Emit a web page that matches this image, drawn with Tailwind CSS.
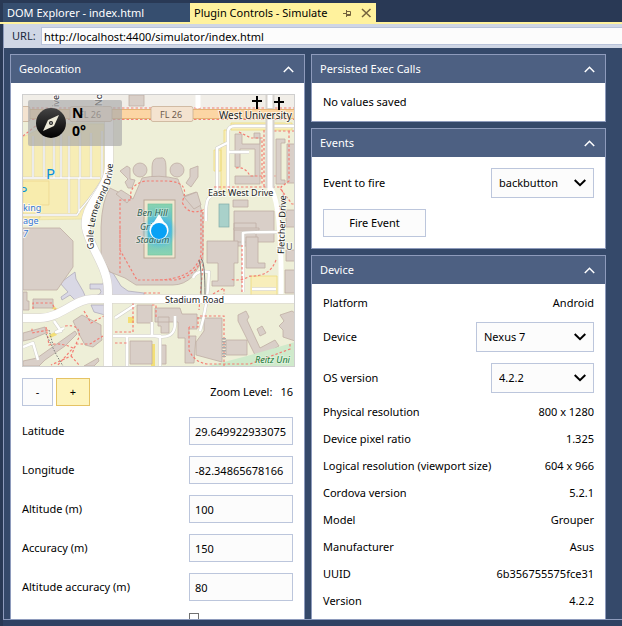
<!DOCTYPE html>
<html lang="en">
<head>
<meta charset="utf-8">
<title>Plugin Controls - Simulate</title>
<script src="https://cdn.jsdelivr.net/npm/@tailwindcss/browser@4"></script>
</head>
<body class="flex h-screen flex-col overflow-hidden bg-[#293955] pt-[3px] font-['Noto_Sans','Open_Sans',sans-serif] text-[11px] leading-4 text-black">
<nav class="flex h-[21px] shrink-0 border-b-2 border-[#fff29d] pl-[3px]" aria-label="Documents">
  <a href="#dom" class="flex w-[187px] items-center bg-[#364e6f] pl-1 text-white">DOM Explorer - index.html</a>
  <div class="flex w-[186px] items-center bg-[#fff29d] pl-1">
    <a href="#simulate" class="w-[148px] whitespace-nowrap">Plugin Controls - Simulate</a>
    <button aria-label="Pin" class="mr-2"><svg width="11" height="10" viewBox="0 0 11 10" fill="none" stroke="#75633d"><path d="M1 5.500h3M4.500 2v7M4.500 3.500h4v4h-4M5 6.500h4"/></svg></button>
    <button aria-label="Close"><svg width="11" height="10" viewBox="0 0 11 10" fill="none" stroke="#75633d" stroke-width="1.500"><path d="M1 1l8.500 8M9.500 1L1 9"/></svg></button>
  </div>
</nav>
<div class="ml-[3px] flex min-h-0 flex-1 flex-col border-b border-l border-[#8e9bbc] bg-[#35496a]">
  <form class="flex h-6 shrink-0 items-center bg-[#cfd6e5] pl-2">
    <label for="url" class="w-[29px] text-[#1b293e]">URL:</label>
    <input id="url" type="text" value="http://localhost:4400/simulator/index.html" class="h-[18px] min-w-0 flex-1 border border-r-0 border-[#b9c3da] bg-[#fcfcfc] pl-[2px]">
  </form>
  <main class="grid min-h-0 flex-1 grid-cols-2 gap-[6px] overflow-hidden pt-[6px] pr-4 pl-[6px]">
    <div class="min-w-0">
      <section class="border border-[#8e9bbc] bg-white">
        <h2 class="flex h-7 items-center justify-between bg-[#4d6082] pr-[10px] pl-2 text-white">Geolocation
          <button aria-label="Collapse Geolocation"><svg width="11" height="7" viewBox="0 0 11 7" fill="none" stroke="#fff" stroke-width="1.500"><path d="M.8 6l4.700-4.700L10.200 6"/></svg></button>
        </h2>
        <div class="flex flex-col gap-[11px] pt-[11px] pr-[11px] pl-[11px]">
          <svg class="block w-[calc(100%+2px)] border border-[#cfcfcf]" viewBox="23 95 271 271" role="img" aria-label="Map">
            <defs>
              <linearGradient id="pitch" x1="0" y1="0" x2="0" y2="1"><stop offset="0" stop-color="#89d3af"/><stop offset=".45" stop-color="#55b9d6"/><stop offset="1" stop-color="#8bd4b0"/></linearGradient>
              <radialGradient id="glow"><stop offset=".4" stop-color="#25b0f4" stop-opacity=".8"/><stop offset="1" stop-color="#55bfe8" stop-opacity="0"/></radialGradient>
              <linearGradient id="compass" x1="0" y1="0" x2="0" y2="1"><stop offset="0" stop-color="#444"/><stop offset="1" stop-color="#000"/></linearGradient>
              <path id="gale" d="M94 249C91 226 98 207 106 193C111 184 113 175 113 160"/>
            </defs>
            <rect x="22" y="94" width="274" height="274" fill="#eeefd8"/>
            <rect x="22" y="94" width="274" height="15" fill="#f1eee8"/>
            <!-- parking areas -->
            <path d="M23 137L50 124H104V185L82 219L23 220Z" fill="#f7edb5" stroke="#e6dfa5" stroke-width=".7"/>
            <path d="M23 181H49V205H40V218H23Z" fill="#f8ecad" stroke="#ecd48a" stroke-width=".7"/>
            <g fill="#f8eeba" stroke="#eddb7c" stroke-width=".8"><path d="M231 123H292V130H231ZM224 130h4v62h-7v-48h3ZM214 150h7v21h-7Z"/><path d="M251 276h26v20h-26Z"/></g>
            <g fill="#f3df77"><path d="M151 344h4v23h-4ZM128 317h6v6h-6ZM49 335l6-3 2 3-7 3ZM53 306l5 3-1 2-6-3Z"/></g>
            <!-- plazas -->
            <path d="M60 283L75 272L76 279L83 291L86 298L78 303L70 295L62 300L61 297L68 292Z" fill="#d9d8e5" stroke="#a9a5b6" stroke-width=".7"/>
            <path d="M90 284H103L106 270L113 273L121 286L128 291L144 293V297H91Q104 295 100 289L90 289ZM91 305H105V315L94 312Z" fill="#d9d8e5" stroke="#a9a5b6" stroke-width=".7"/>
            <g fill="#d9cfc8" stroke="#bfada3" stroke-width=".8">
              <!-- west blocks -->
              <path d="M23 228H60L73 241V267L57 290H23ZM23 292H27V301H29V310H23ZM33 299H53V308H33ZM23 333L45 327L46 333L32 339L23 341ZM37 358L75 331L77 334L65 346L45 360L39 366H23V361ZM73 321L82 315L101 325V334L102 340L93 347L85 345L79 334ZM84 366L98 358L99 361L94 366Z"/>
              <path d="M129 95h15v11h-15Z"/>
              <!-- stadium -->
              <path d="M120 171l7-5 3 2 0 11 5 1-3 8-4 0-3-6 3-3Z"/>
              <circle cx="140" cy="170" r="7"/><path d="M152 167q0-10 8-9 6-2 6 9v12h-14Z"/><circle cx="177" cy="170" r="7"/>
              <path d="M190 169l8-3 0 11-7 10-5-4 4-6Z"/>
              <path d="M110 188L133 199L142 178Q158 174 178 179L184 196L196 192L203 215V260L193 276Q184 285 173 285H136L125 278L110 272L101 255V227Q102 200 110 188Z"/>
              <path d="M121 190L132 197L127 203L116 194ZM184 197L197 192L201 205L194 209Z"/>
              <!-- north-east blocks -->
              <path d="M235 134h7v10h18v-6h-6v-5h6v51h-25v-8h20v-27h-15v18h-5Z"/>
              <path d="M276 139h9v4h-4v37h4v4h-9ZM287 144h8v39h-8Z"/>
              <path d="M233 200h15v7h-15ZM234 211h40v31h-40ZM286 210h9v17h-9ZM234 223h22v23h-22Z"/>
              <!-- east blocks -->
              <path d="M207 241h31v22h-4v23h-22v-5h6v-18h-11ZM246 237h12v26h7v5h-19ZM234 228h25v2h-25ZM286 250h9v11h-9ZM285 270h10v23h-10Z"/>
              <path d="M155 308h25l2 6h15v15h-8v7h7l-2 27h-9v-25h-7v-16h-23ZM158 317h11v16h-8v-7h-3ZM160 345h6v19h-6ZM197 318h25v44l-26-7v-13l8-11v-13ZM226 340h21v15h-21ZM238 315l8-4 3 6-2 3 13 28 15-8 4 6-14 8-10 1-17-34ZM257 329l5-3 4 7-6 3ZM280 315l12-4 3 2v28l-12-4 0-7-4-4 5-5Z"/>
              <path d="M137 305h15v18h-15ZM130 341h22v23h-22Z"/>
            </g>
            <path d="M208 366Q260 353 295 342V366Z" fill="#cfeacb"/>
            <!-- pitches -->
            <rect x="144" y="200" width="31" height="58" fill="#eee7cf" stroke="#b9a896"/>
            <rect x="148" y="204" width="24" height="51" fill="url(#pitch)" stroke="#73c5a0" stroke-width=".7"/>
            <rect x="219" y="204" width="10" height="23" fill="#a9d1ca" stroke="#81aca8" stroke-width=".7"/>
            <circle cx="159" cy="231" r="18" fill="url(#glow)"/>
            <!-- minor roads -->
            <g fill="none" stroke="#d1cfca" stroke-width="3.500" stroke-linejoin="round"><path d="M217 190V148L227 143M228 190V132Q228 126 235 126H295M228 152H249M206 221Q205 197 211 197M243 292V233Q244 232 280 232M193 278Q196 270 209 272Q208 305 200 331M113 336H160V366M127 336V366M152 322V336M155 336Q174 340 175 325V316M23 347L33 343L38 360M54 321L61 331L56 332L64 328M252 289h24M115 318L135 305"/></g>
            <g fill="none" stroke="#fff" stroke-width="2.500" stroke-linejoin="round"><path d="M217 190V148L227 143M228 190V132Q228 126 235 126H295M228 152H249M206 221Q205 197 211 197M243 292V233Q244 232 280 232M193 278Q196 270 209 272Q208 305 200 331M113 336H160V366M127 336V366M152 322V336M155 336Q174 340 175 325V316M23 347L33 343L38 360M54 321L61 331L56 332L64 328M252 289h24M115 318L135 305"/></g>
            <g stroke="#c9c7c2" stroke-width="2.300" fill="none"><path d="M33 136V177M44 130V177M54 124V178M61 124V178M69 136V213M80 133V178M91 133V178M23 178H100M79 178V213M102 131V180Q94 194 80 210L77 215H23"/></g>
            <g stroke="#fff" stroke-width="1.300" fill="none"><path d="M33 136V177M44 130V177M54 124V178M61 124V178M69 136V213M80 133V178M91 133V178M23 178H100M79 178V213M102 131V180Q94 194 80 210L77 215H23"/></g>
            <!-- footpaths -->
            <g fill="none" stroke="#f47d73" stroke-width="1.200" stroke-dasharray="2.500 2">
              <path d="M23 108H295M23 119.500H295M23 136L42 121M120 273V200H131Q128 185 145 181H169Q191 183 182 202Q188 216 203 210V252Q200 275 175 280H137L120 250V225M201 210V255Q194 280 155 280"/>
              <path d="M239 132L251 138H262V184M236 168Q245 166 250 176H276M264 130V188M214 187H279L292 204H295M274 131H294M289 131V181L281 187L286 203M280 208V294M276 260Q270 277 250 276Q240 282 230 279M242 292V245"/>
              <path d="M33 309V303H52L57 313M84 311L91 323L106 315M46 327L49 345Q60 342 73 348L57 366M48 330L32 333V327M65 326Q81 324 79 337L71 356L51 365M71 356L80 366M76 344H90L103 336M115 332H133V303M115 343H127M156 317V305H152M189 327V350Q194 362 207 364H250L290 349V343M200 316H224V366M198 317V327H189M203 264L199 310M213 294L224 288V294M144 293H160"/>
            </g>
            <g fill="none" stroke="#777" stroke-dasharray="1.500 1.500"><path d="M46 334L57 356L63 366M49 330L53 345"/><path d="M224 338V357" stroke-width="4" stroke="#aaa"/><path d="M201 259Q205 260 205 296M199 260Q202 268 201 296" stroke-dasharray="none"/></g>
            <!-- main roads -->
            <g fill="none" stroke="#d6d2cd" stroke-width="9" stroke-linejoin="round"><path d="M109 120V165C109 190 82 205 86 228C89 246 108 267 108 290V367M22 318H40C60 318 75 299 92 299H295M270 95V188"/></g>
            <path d="M22 114H296" stroke="#dfa765" stroke-width="10"/><path d="M22 114H296" stroke="#fcd6a4" stroke-width="8.500"/>
            <g fill="none" stroke="#fff" stroke-width="8"><path d="M109 120V165C109 190 82 205 86 228C89 246 108 267 108 290V367M22 318H40C60 318 75 299 92 299H296"/><path d="M270 120V190M270 95V108M198 95V108M56 95V108M100 95V108M270 188Q282 200 281 294" stroke-width="5"/></g>
            <!-- road badges -->
            <g fill="#f4e3d0" stroke="#c8ae96" stroke-width=".8"><rect x="15" y="106.500" width="15" height="15" rx="2"/><rect x="70" y="106.500" width="42" height="15" rx="2"/><rect x="151" y="106.500" width="42" height="15" rx="2"/></g>
            <g font-family="Noto Sans, sans-serif" font-size="9" fill="#6d5a4c"><text x="79" y="118">FL 26</text><text x="160" y="118">FL 26</text></g>
            <g font-family="Noto Sans, sans-serif" font-size="9" fill="#222" stroke="#fff" stroke-opacity=".7" stroke-width="2" paint-order="stroke">
              <text x="219" y="119" font-size="10">West University</text>
              <text x="208" y="196">East West Drive</text>
              <text x="165" y="303">Stadium Road</text>
              <text><textPath href="#gale">Gale Lemerand Drive</textPath></text>
              <text transform="translate(284 254) rotate(-88)">Fletcher Drive</text>
              <text transform="translate(59 107) rotate(-90)">ive</text>
              <text transform="translate(102 106) rotate(-90)">No</text>
              <text x="286" y="250" fill="#555">U</text>
              <g font-style="italic" fill="#326454" stroke-opacity=".3"><text x="137" y="216">Ben Hill</text><text x="140" y="230">Griffin</text><text x="136" y="243">Stadium</text><text x="255" y="363" fill="#187b38">Reitz Uni</text></g>
              <g fill="#3577d4" font-size="9"><text x="23" y="211">king</text><text x="23" y="224">age</text><text x="23" y="237" font-style="italic">7</text></g>
            </g>
            <g fill="#0a91d7" font-family="Noto Sans, sans-serif"><text x="46" y="179" font-size="15">P</text><text x="20" y="196" font-size="12">P</text></g>
            <path d="M257 96v13M252 101h10M279 97v13M274 102h10" stroke="#000" stroke-width="2"/>
            <!-- position marker -->
            <path d="M159 214L164 222A9.500 9.500 0 1 1 154 222Z" fill="#fff"/><circle cx="159" cy="231" r="8" fill="#08a1f5"/>
            <!-- heading -->
            <rect x="28" y="100" width="94" height="46" rx="2" fill="#aaa" fill-opacity=".68"/>
            <circle cx="51" cy="123" r="15" fill="url(#compass)"/>
            <path d="M59 115L54 126L43 131L48 120Z" fill="#ece9d8"/><circle cx="51" cy="123" r="2" fill="#222"/><circle cx="51" cy="123" r=".8" fill="#fff"/>
            <g font-family="Open Sans, sans-serif" font-weight="700" font-size="14"><text x="72" y="118">N</text><text x="72" y="136">0°</text></g>
          </svg>
          <div class="flex h-7 items-center gap-[3px]">
            <button aria-label="Zoom out" class="h-7 w-[31px] border border-[#bcc6dc] bg-[#fcfcfc]">-</button>
            <button aria-label="Zoom in" class="h-7 w-[34px] border border-[#e5c365] bg-[#fdf4bf]">+</button>
            <p class="ml-auto flex gap-2"><span>Zoom Level:</span><span>16</span></p>
          </div>
          <div class="flex items-center justify-between"><label for="lat">Latitude</label><input id="lat" type="text" value="29.649922933075" class="h-7 w-[104px] border border-[#bcc6dc] bg-[#fcfcfc] px-[5px]"></div>
          <div class="flex items-center justify-between"><label for="lon">Longitude</label><input id="lon" type="text" value="-82.34865678166" class="h-7 w-[104px] border border-[#bcc6dc] bg-[#fcfcfc] px-[5px]"></div>
          <div class="flex items-center justify-between"><label for="alt">Altitude (m)</label><input id="alt" type="text" value="100" class="h-7 w-[104px] border border-[#bcc6dc] bg-[#fcfcfc] px-[5px]"></div>
          <div class="flex items-center justify-between"><label for="acc">Accuracy (m)</label><input id="acc" type="text" value="150" class="h-7 w-[104px] border border-[#bcc6dc] bg-[#fcfcfc] px-[5px]"></div>
          <div class="flex items-center justify-between"><label for="altacc">Altitude accuracy (m)</label><input id="altacc" type="text" value="80" class="h-7 w-[104px] border border-[#bcc6dc] bg-[#fcfcfc] px-[5px]"></div>
          <div class="flex justify-end pt-[1px]"><div class="w-[104px]"><input type="checkbox" aria-label="Enable" class="block h-[10px] w-[10px] appearance-none border border-[#717171] bg-white"></div></div>
        </div>
      </section>
    </div>
    <div class="flex min-w-0 flex-col gap-[6px]">
      <section class="shrink-0 border border-[#8e9bbc] bg-white">
        <h2 class="flex h-7 items-center justify-between bg-[#4d6082] pr-[10px] pl-2 text-white">Persisted Exec Calls
          <button aria-label="Collapse Persisted Exec Calls"><svg width="11" height="7" viewBox="0 0 11 7" fill="none" stroke="#fff" stroke-width="1.500"><path d="M.8 6l4.700-4.700L10.200 6"/></svg></button>
        </h2>
        <p class="px-[11px] py-[11px]">No values saved</p>
      </section>
      <section class="shrink-0 border border-[#8e9bbc] bg-white">
        <h2 class="flex h-7 items-center justify-between bg-[#4d6082] pr-[10px] pl-2 text-white">Events
          <button aria-label="Collapse Events"><svg width="11" height="7" viewBox="0 0 11 7" fill="none" stroke="#fff" stroke-width="1.500"><path d="M.8 6l4.700-4.700L10.200 6"/></svg></button>
        </h2>
        <div class="flex flex-col gap-[11px] p-[11px]">
          <div class="flex items-center justify-between"><label for="event">Event to fire</label>
            <div class="grid w-[103px] items-center">
              <select id="event" class="col-start-1 row-start-1 h-[30px] w-full appearance-none border border-[#bcc6dc] bg-[#fcfcfc] px-[7px]"><option>backbutton</option></select>
              <svg class="pointer-events-none col-start-1 row-start-1 mr-2 justify-self-end" width="12" height="8" viewBox="0 0 12 8" fill="none" stroke="#000" stroke-width="2"><path d="M.7 1L6 6.200L11.300 1"/></svg>
            </div>
          </div>
          <button class="h-7 w-[103px] border border-[#bcc6dc] bg-[#fcfcfc]">Fire Event</button>
        </div>
      </section>
      <section class="shrink-0 border border-[#8e9bbc] bg-white">
        <h2 class="flex h-7 items-center justify-between bg-[#4d6082] pr-[10px] pl-2 text-white">Device
          <button aria-label="Collapse Device"><svg width="11" height="7" viewBox="0 0 11 7" fill="none" stroke="#fff" stroke-width="1.500"><path d="M.8 6l4.700-4.700L10.200 6"/></svg></button>
        </h2>
        <div class="px-[11px] py-[5px]">
          <div class="flex h-[27px] items-center justify-between"><span>Platform</span><span>Android</span></div>
          <div class="flex h-[41px] items-center justify-between"><label for="device">Device</label>
            <div class="grid w-[118px] items-center">
              <select id="device" class="col-start-1 row-start-1 h-[30px] w-full appearance-none border border-[#bcc6dc] bg-[#fcfcfc] px-[7px]"><option>Nexus 7</option></select>
              <svg class="pointer-events-none col-start-1 row-start-1 mr-2 justify-self-end" width="12" height="8" viewBox="0 0 12 8" fill="none" stroke="#000" stroke-width="2"><path d="M.7 1L6 6.200L11.300 1"/></svg>
            </div>
          </div>
          <div class="flex h-[41px] items-center justify-between"><label for="os">OS version</label>
            <div class="grid w-[103px] items-center">
              <select id="os" class="col-start-1 row-start-1 h-[30px] w-full appearance-none border border-[#bcc6dc] bg-[#fcfcfc] px-[7px]"><option>4.2.2</option></select>
              <svg class="pointer-events-none col-start-1 row-start-1 mr-2 justify-self-end" width="12" height="8" viewBox="0 0 12 8" fill="none" stroke="#000" stroke-width="2"><path d="M.7 1L6 6.200L11.300 1"/></svg>
            </div>
          </div>
          <dl>
            <div class="flex h-[27px] items-center justify-between"><dt>Physical resolution</dt><dd>800 x 1280</dd></div>
            <div class="flex h-[27px] items-center justify-between"><dt>Device pixel ratio</dt><dd>1.325</dd></div>
            <div class="flex h-[27px] items-center justify-between"><dt>Logical resolution (viewport size)</dt><dd>604 x 966</dd></div>
            <div class="flex h-[27px] items-center justify-between"><dt>Cordova version</dt><dd>5.2.1</dd></div>
            <div class="flex h-[27px] items-center justify-between"><dt>Model</dt><dd>Grouper</dd></div>
            <div class="flex h-[27px] items-center justify-between"><dt>Manufacturer</dt><dd>Asus</dd></div>
            <div class="flex h-[27px] items-center justify-between"><dt>UUID</dt><dd>6b356755575fce31</dd></div>
            <div class="flex h-[27px] items-center justify-between"><dt>Version</dt><dd>4.2.2</dd></div>
          </dl>
        </div>
      </section>
    </div>
  </main>
</div>
<footer class="ml-[3px] h-[6px] shrink-0 bg-[#2f4263]"></footer>
</body>
</html>
